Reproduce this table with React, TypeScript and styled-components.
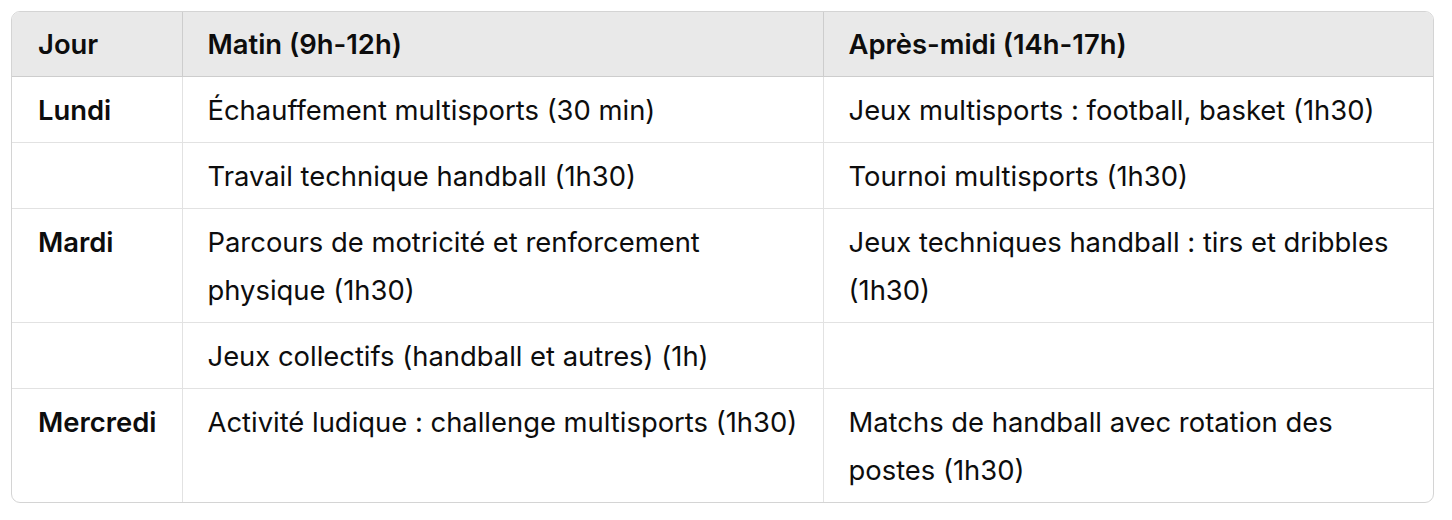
import React from "react";
import styled, { createGlobalStyle } from "styled-components";

const Global = createGlobalStyle`
  html, body { margin: 0; padding: 0; background: #ffffff; }
  body { font-family: Inter, "Noto Sans", "Liberation Sans", sans-serif; color: #0d0d0d; }
`;

const Page = styled.div`
  padding: 11px 18px 0 11px;
`;

const Frame = styled.div`
  border: 1px solid #d4d4d4;
  border-radius: 9px;
  overflow: hidden;
`;

const Table = styled.table`
  width: 100%;
  border-collapse: collapse;
  table-layout: fixed;
  font-size: 27.4px;
  line-height: 48px;
`;

const HeadCell = styled.th`
  background: #e9e9e9;
  text-align: left;
  font-weight: 600;
  padding: 8px 24px 8px 26px;
  border-bottom: 1px solid #cdcdcd;
  & + & { border-left: 1px solid #cdcdcd; padding-left: 25px; }
`;

const Cell = styled.td<{ $bold?: boolean }>`
  vertical-align: top;
  padding: 9px 24px 8px 26px;
  font-weight: ${(p) => (p.$bold ? 600 : 400)};
  & + & { border-left: 1px solid #e2e2e2; padding-left: 25px; }
`;

const Row = styled.tr`
  & + & > td { border-top: 1px solid #e2e2e2; }
`;

const rows: [string, string, string][] = [
  ["Lundi", "Échauffement multisports (30 min)", "Jeux multisports : football, basket (1h30)"],
  ["", "Travail technique handball (1h30)", "Tournoi multisports (1h30)"],
  ["Mardi", "Parcours de motricité et renforcement physique (1h30)", "Jeux techniques handball : tirs et dribbles (1h30)"],
  ["", "Jeux collectifs (handball et autres) (1h)", ""],
  ["Mercredi", "Activité ludique : challenge multisports (1h30)", "Matchs de handball avec rotation des postes (1h30)"],
];

export default function App() {
  return (
    <Page>
      <Global />
      <Frame>
        <Table>
          <colgroup>
            <col style={{ width: 170 }} />
            <col style={{ width: 641 }} />
            <col />
          </colgroup>
          <thead>
            <tr>
              <HeadCell>Jour</HeadCell>
              <HeadCell>Matin (9h-12h)</HeadCell>
              <HeadCell>Après-midi (14h-17h)</HeadCell>
            </tr>
          </thead>
          <tbody>
            {rows.map((r, i) => (
              <Row key={i}>
                <Cell $bold>{r[0]}</Cell>
                <Cell>{r[1]}</Cell>
                <Cell>{r[2]}</Cell>
              </Row>
            ))}
          </tbody>
        </Table>
      </Frame>
    </Page>
  );
}
